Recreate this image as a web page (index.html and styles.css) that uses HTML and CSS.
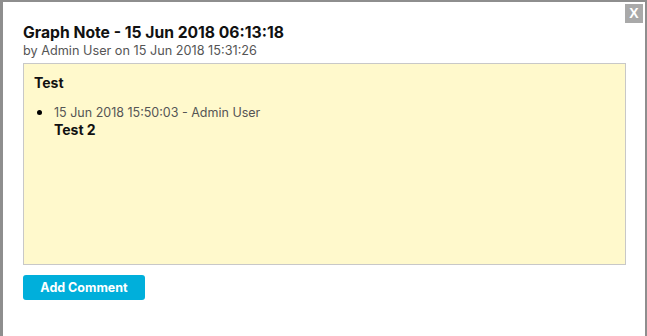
FILE: index.html
```html
<!DOCTYPE html>
<html lang="en">
<head>
    <meta charset="UTF-8">
    <title>Graph Note</title>
    <link rel="stylesheet" href="styles.css">
</head>
<body>
    <div class="modal">
        <button class="close">X</button>
        <h2 class="title">Graph Note - 15 Jun 2018 06:13:18</h2>
        <div class="meta">by Admin User on 15 Jun 2018 15:31:26</div>
        <div class="note">
            <div class="note-text">Test</div>
            <ul class="comments">
                <li>
                    <div class="comment-meta">15 Jun 2018 15:50:03 - Admin User</div>
                    <div class="comment-text">Test 2</div>
                </li>
            </ul>
        </div>
        <button class="add">Add Comment</button>
    </div>
</body>
</html>
```

FILE: styles.css
```css
body {
    margin: 0;
    height: 336px;
    overflow: hidden;
    background: #8e8e8e;
    font-family: 'Inter', 'Open Sans', sans-serif;
    padding: 2px 2px 0 3px;
    box-sizing: border-box;
}
.modal {
    position: relative;
    background: #fff;
    height: 100%;
    padding: 21px 19px 0 20px;
    box-sizing: border-box;
}
.close {
    position: absolute;
    top: 2px;
    right: 2px;
    width: 18px;
    height: 19px;
    padding: 0;
    border: none;
    background: #a9a9a9;
    color: #fff;
    font-family: 'Liberation Sans', sans-serif;
    font-weight: bold;
    font-size: 14px;
    line-height: 19px;
}
.title {
    margin: 0;
    font-size: 15.7px;
    font-weight: 700;
    color: #111;
    line-height: 20px;
}
.meta {
    font-size: 12.7px;
    color: #555;
    line-height: 16px;
    margin-bottom: 4px;
}
.note {
    background: #fff9cc;
    border: 1px solid #c8c8c8;
    height: 202px;
    box-sizing: border-box;
    padding: 10px 10px;
}
.note-text {
    font-weight: 700;
    font-size: 14px;
    color: #111;
    line-height: 18px;
}
.comments {
    margin: 9px 0 0;
    padding-left: 20px;
}
.comment-meta {
    font-size: 12.5px;
    color: #555;
    line-height: 16px;
}
.comment-text {
    font-weight: 700;
    font-size: 14px;
    color: #111;
    line-height: 18px;
}
.add {
    margin-top: 10px;
    width: 122px;
    height: 25px;
    border: none;
    border-radius: 3px;
    background: #00afdb;
    color: #fff;
    font-family: inherit;
    font-weight: 700;
    font-size: 12.5px;
    padding: 0;
}
```
